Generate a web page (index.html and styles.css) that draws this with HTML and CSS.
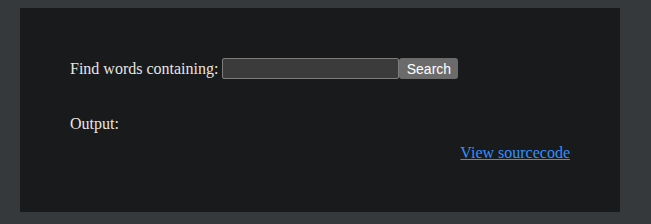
FILE: index.html
```html
<!DOCTYPE html>
<html lang="en">
<head>
  <meta charset="UTF-8">
  <title>Find words</title>
  <link rel="stylesheet" href="styles.css">
</head>
<body>
  <div class="panel">
    <form class="search-row" onsubmit="return false;">
      <label for="word">Find words containing:</label>
      <input type="text" id="word" class="search-input">
      <button type="submit" class="search-button">Search</button>
    </form>
    <p class="output">Output:</p>
    <p class="source"><a href="#">View sourcecode</a></p>
  </div>
</body>
</html>
```

FILE: styles.css
```css
html, body {
  margin: 0;
  padding: 0;
}

body {
  background-color: #35393b;
  color: #e8e6e3;
  font-family: "Liberation Serif", "Times New Roman", serif;
  font-size: 16px;
  padding: 8px 0 0 20px;
  height: 224px;
  box-sizing: border-box;
}

.panel {
  width: 600px;
  height: 204px;
  box-sizing: border-box;
  background-color: #181a1b;
  padding: 50px 50px 0 50px;
}

.search-row {
  display: flex;
  align-items: center;
  height: 21px;
  margin: 0;
}

.search-row label {
  margin-right: 4px;
}

.search-input {
  width: 177px;
  height: 21px;
  box-sizing: border-box;
  margin: 0;
  background-color: #3b3b3b;
  border: 1px solid #7d7d7d;
  border-radius: 2px;
  color: #e8e6e3;
  padding: 1px 2px;
}

.search-button {
  height: 21px;
  width: 59px;
  box-sizing: border-box;
  margin: 0;
  padding: 0;
  border: none;
  border-radius: 3px;
  background-color: #6b6b6b;
  color: #ffffff;
  font-family: "Liberation Sans", Arial, sans-serif;
  font-size: 14px;
}

.output {
  margin: 36px 0 0 0;
}

.source {
  margin: 11px 0 0 0;
  text-align: right;
}

.source a {
  color: #3391ff;
}
```
